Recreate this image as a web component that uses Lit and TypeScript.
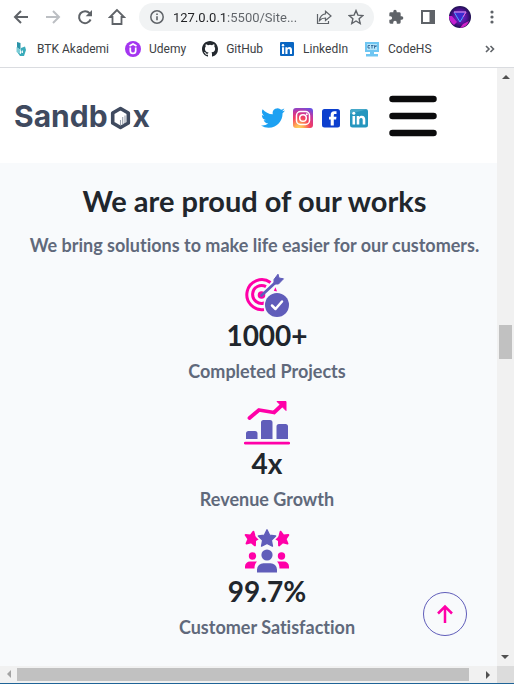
import { LitElement, html, css, svg } from "lit";
import { customElement } from "lit/decorators.js";

const star = "M0-9.5 2.9-3.6 9.4-2.8 4.7 1.8 5.9 8.3 0 5.2-5.9 8.3-4.7 1.8-9.4-2.8-2.9-3.6Z";

const icons = {
  back: html`<svg width="16" height="16" viewBox="0 0 16 16"><path d="M15 8H2.500M8 2 2 8l6 6" fill="none" stroke="currentColor" stroke-width="2"/></svg>`,
  forward: html`<svg width="16" height="16" viewBox="0 0 16 16"><path d="M1 8h12.500M8 2l6 6-6 6" fill="none" stroke="currentColor" stroke-width="2"/></svg>`,
  reload: html`<svg width="16" height="16" viewBox="0 0 16 16"><path d="M13.600 10.500A6 6 0 1 1 12.600 4.200" fill="none" stroke="currentColor" stroke-width="2"/><path d="M15 1v6.300H8.700Z" fill="currentColor"/></svg>`,
  home: html`<svg width="18" height="18" viewBox="0 0 18 18"><path d="M9 2 2 9h2.500v7h9V9H16Z" fill="none" stroke="currentColor" stroke-width="1.800"/></svg>`,
  info: html`<svg width="16" height="16" viewBox="0 0 16 16"><circle cx="8" cy="8" r="6.200" fill="none" stroke="currentColor" stroke-width="1.500"/><path d="M7.200 7.200h1.600v4H7.200zM7.200 4.500h1.600v1.600H7.200z" fill="currentColor"/></svg>`,
  share: html`<svg width="16" height="16" viewBox="0 0 16 16"><path d="M1.500 5v9.500h11V12M9.500 2.200 15 7l-5.500 4.500V9C7 9 5 9.700 3.500 11.500 4 7.500 6 5.200 9.500 4.800Z" fill="none" stroke="currentColor" stroke-width="1.200"/></svg>`,
  star: html`<svg width="16" height="16" viewBox="0 0 16 16"><path d="m8 1.600 1.900 4.500 4.900.4-3.700 3.200 1.100 4.800L8 12l-4.200 2.500 1.100-4.800L1.200 6.500l4.900-.4Z" fill="none" stroke="currentColor" stroke-width="1.400"/></svg>`,
  puzzle: html`<svg width="16" height="16" viewBox="0 0 24 24"><path d="M20.500 11H19V7a2 2 0 0 0-2-2h-4V3.500a2.500 2.500 0 0 0-5 0V5H4a2 2 0 0 0-2 2v3.800h1.500a2.700 2.700 0 0 1 0 5.400H2V20a2 2 0 0 0 2 2h3.800v-1.500a2.700 2.700 0 0 1 5.400 0V22H17a2 2 0 0 0 2-2v-4h1.500a2.500 2.500 0 0 0 0-5Z" fill="currentColor"/></svg>`,
  panel: html`<svg width="14" height="14" viewBox="0 0 14 14"><path d="M1 1h12v12H1z" fill="none" stroke="currentColor" stroke-width="2"/><path d="M8.500 1H13v12H8.500z" fill="currentColor"/></svg>`,
  avatar: html`<svg width="22" height="22" viewBox="0 0 22 22"><defs><radialGradient id="av"><stop offset="0" stop-color="#6a35d8"/><stop offset=".6" stop-color="#57119e"/><stop offset="1" stop-color="#1d1050"/></radialGradient></defs><circle cx="11" cy="11" r="11" fill="url(#av)"/><path d="M0 10a11 11 0 0 0 5 9l3-3-5-6Z" fill="#c41fd0"/><path d="M14 18l6-3a11 11 0 0 1-9 7Z" fill="#d021c8"/><path d="M5 6h12l-6 10Z" fill="#3b2bd0" stroke="#49a8ff" stroke-width="1"/><path d="M5 6h12l-3 5" fill="none" stroke="#f05ad8" stroke-width="1"/></svg>`,
  menu: html`<svg width="4" height="16" viewBox="0 0 4 16"><circle cx="2" cy="3" r="1.600" fill="currentColor"/><circle cx="2" cy="8" r="1.600" fill="currentColor"/><circle cx="2" cy="13" r="1.600" fill="currentColor"/></svg>`,
  btk: html`<svg width="16" height="16" viewBox="0 0 16 16"><path d="M4 1l3.500 1v7L4 6.500Z" fill="#2a93a8"/><path d="M3.500 6l4 3-1 4-3-2Z" fill="#7accd6"/><path d="M8 7l4-1.500 1 3.500-2 6H7l-2.500-3.500L8 13Z" fill="#3aabba"/><path d="M8.500 10l1.500-.8v2.800H8.500Z" fill="#e8f7f9"/></svg>`,
  udemy: html`<svg width="16" height="16" viewBox="0 0 16 16"><circle cx="8" cy="8" r="8" fill="#a435f0"/><path d="m4.500 5 3.500-2 3.500 2M5.300 6.500v3.200a2.700 2.700 0 0 0 5.400 0V6.500" fill="none" stroke="#fff" stroke-width="1.700"/></svg>`,
  github: html`<svg width="16" height="16" viewBox="0 0 16 16"><path fill="#24292f" d="M8 0C3.580 0 0 3.580 0 8c0 3.540 2.290 6.530 5.470 7.590.4.070.55-.17.55-.38 0-.19-.01-.82-.01-1.490-2.010.37-2.530-.49-2.690-.94-.09-.23-.48-.94-.82-1.130-.28-.15-.68-.52-.01-.53.63-.01 1.080.58 1.230.82.72 1.210 1.870.87 2.330.66.07-.52.28-.87.51-1.070-1.780-.2-3.640-.89-3.640-3.950 0-.87.31-1.590.82-2.150-.08-.2-.36-1.020.08-2.120 0 0 .67-.21 2.200.82a7.640 7.640 0 0 1 4 0c1.530-1.040 2.200-.82 2.200-.82.44 1.100.16 1.920.08 2.120.51.56.82 1.270.82 2.150 0 3.070-1.870 3.750-3.650 3.950.29.25.54.73.54 1.480 0 1.070-.01 1.930-.01 2.200 0 .21.15.46.55.38A8.010 8.010 0 0 0 16 8c0-4.420-3.580-8-8-8Z"/></svg>`,
  linkedin: html`<svg width="16" height="16" viewBox="0 0 16 16"><rect x="1" y="1" width="14" height="14" rx="1" fill="#0a66c2"/><path d="M3 6.300h2.100V13H3zM6.400 6.300h2v.9c.4-.7 1.100-1.100 2-1.100 2.200 0 2.600 1.400 2.600 3.200V13h-2.100V9.700c0-.8 0-1.800-1.100-1.800s-1.300.9-1.300 1.700V13H6.400z" fill="#fff"/><circle cx="4" cy="4.200" r="1.200" fill="#fff"/></svg>`,
  codehs: html`<svg width="16" height="16" viewBox="0 0 16 16"><path d="M1 1h14v10H1zM6 11h4v2H6zM2 13h12v2.500H2z" fill="#6fc6f2"/><path d="M3 3h10v6H3z" fill="#b5e4fa"/><path d="M4 7V4.500h2M4 7h2M8 4v3.500M7 4.500h2.500M10.500 7.500v-3l1.500 1.500V4" fill="none" stroke="#3b6f9c" stroke-width="1"/></svg>`,
  hexagon: html`<svg width="21" height="28" viewBox="0 -4 21 28"><path d="M10.500 2.500 18.300 7v10l-7.800 4.500L2.700 17V7Z" fill="#fff" stroke="#3f4a5f" stroke-width="3.600" stroke-linejoin="round"/><path d="M10.500 19v-5M12.700 18.500v-7.500M15 17V9.500" stroke="#9aa1ad" stroke-width="1.100"/></svg>`,
  twitter: html`<svg width="24" height="22" viewBox="0 1.500 24 21"><path fill="#1da1f2" d="M23.950 4.570a10 10 0 0 1-2.820.77 4.960 4.960 0 0 0 2.160-2.720c-.95.550-2.010.96-3.130 1.180a4.920 4.920 0 0 0-8.380 4.480C7.690 8.100 4.070 6.130 1.640 3.160a4.820 4.820 0 0 0-.67 2.480c0 1.710.87 3.210 2.190 4.100a4.900 4.900 0 0 1-2.230-.62v.06a4.920 4.920 0 0 0 3.950 4.830 5 5 0 0 1-2.210.08 4.940 4.940 0 0 0 4.600 3.420A9.870 9.870 0 0 1 0 19.540a13.990 13.990 0 0 0 7.550 2.210c9.050 0 14-7.500 14-13.980 0-.21 0-.42-.02-.63a9.940 9.940 0 0 0 2.420-2.570Z"/></svg>`,
  instagram: html`<svg width="20" height="20" viewBox="0 0 20 20"><defs><radialGradient id="ig" cx=".3" cy="1.050" r="1.150"><stop offset="0" stop-color="#ffdc64"/><stop offset=".2" stop-color="#ffb054"/><stop offset=".5" stop-color="#f4405f"/><stop offset=".75" stop-color="#c9359b"/><stop offset="1" stop-color="#6a4fe0"/></radialGradient></defs><rect width="20" height="20" rx="3" fill="url(#ig)"/><rect x="3.500" y="3.500" width="13" height="13" rx="4" fill="none" stroke="#fff" stroke-width="1.500"/><circle cx="10" cy="10" r="3.300" fill="none" stroke="#fff" stroke-width="1.500"/><circle cx="13.800" cy="6.200" r="1" fill="#fff"/></svg>`,
  facebook: html`<svg width="20" height="20" viewBox="0 0 20 20"><rect x="1" y="1" width="18" height="18.500" rx="2.500" fill="#0c3fce"/><path d="M9.700 17.500v-6H8V8.800h1.700V7c0-2.600 1.200-3.800 3.600-3.800H15.500V6H14c-.9 0-1.200.4-1.200 1.200v1.600h2.700l-.4 2.700h-2.300v6Z" fill="#fff"/></svg>`,
  linkedinAlt: html`<svg width="20" height="20" viewBox="0 0 20 20"><rect x="1" y="1" width="18" height="18.500" rx="2.500" fill="#2596be"/><path d="M1 6V3.500A2.500 2.500 0 0 1 3.500 1H19Z" fill="#45a8c9"/><path d="M3.500 8h2.600v8.500H3.500zM7.700 8h2.500v1.200c.5-.9 1.400-1.400 2.600-1.400 2.700 0 3.500 1.700 3.500 4v4.700h-2.600v-4.300c0-1.200-.2-2.200-1.600-2.200s-1.800 1-1.800 2.100v4.400H7.700z" fill="#fff"/><circle cx="4.800" cy="5.300" r="1.500" fill="#fff"/></svg>`,
  burger: html`<svg width="48" height="42" viewBox="0 0 48 42"><path d="M3.500 4h41M3.500 21h41M3.500 38h41" stroke="#0b0b0c" stroke-width="6.500" stroke-linecap="round"/></svg>`,
  target: html`<svg width="46" height="44" viewBox="0 0 46 44"><g fill="none" stroke="#ff00a8" stroke-width="3"><path d="M26.500 9.400A15 15 0 1 0 20 36.500"/><path d="M22 13.600A9 9 0 1 0 20.500 30"/></g><circle cx="17.500" cy="22" r="3.800" fill="#ff00a8"/><path d="M31.500 14.200 33.200 18.800 29.800 17.800Z" fill="#ff00a8"/><path d="M17.500 22.500 32 9" stroke="#605dba" stroke-width="2.800" stroke-linecap="round"/><path d="M30 6.500 34 1.200 35 5l4.500.8L34.500 11H30Z" fill="#605dba" stroke="#605dba" stroke-linejoin="round"/><circle cx="33" cy="32" r="13.500" fill="#f8fafc"/><circle cx="33" cy="32" r="12" fill="#605dba"/><path d="m28 32.500 3.500 3.500 6.500-7.500" fill="none" stroke="#fff" stroke-width="2.500" stroke-linecap="round" stroke-linejoin="round"/></svg>`,
  growth: html`<svg width="46" height="44" viewBox="0 0 46 44"><path d="M5.500 17 15 9l15 2.500 8-7.500" fill="none" stroke="#ff00a8" stroke-width="3.800" stroke-linecap="round" stroke-linejoin="round"/><path d="M33 .500h9v9Z" fill="#ff00a8" stroke="#ff00a8" stroke-linejoin="round"/><path d="M2 38v-5.500a2.500 2.500 0 0 1 2.500-2.500h6.500a2.500 2.500 0 0 1 2.500 2.500V38ZM17 38V21.500a2.500 2.500 0 0 1 2.500-2.500h6.500a2.500 2.500 0 0 1 2.500 2.500V38ZM32.500 38V25.500a2.500 2.500 0 0 1 2.500-2.500h6.500a2.500 2.500 0 0 1 2.500 2.500V38Z" fill="#605dba"/><path d="M1.300 42.200h43.400" stroke="#ff00a8" stroke-width="2.800" stroke-linecap="round"/></svg>`,
  people: html`<svg width="46" height="44" viewBox="0 0 46 44"><g stroke-linejoin="round">${svg`
    <g fill="#ff00a8" stroke="#ff00a8" stroke-width="2.500"><path d=${star} transform="translate(8 9.500) rotate(12) scale(.74)"/><path d=${star} transform="translate(38 9.500) rotate(-12) scale(.74)"/></g>
    <path d=${star} fill="#f8fafc" stroke="#f8fafc" stroke-width="4" transform="translate(23 9.500)"/>
    <path d=${star} fill="#605dba" stroke="#605dba" stroke-width="1.500" transform="translate(23 9.500) scale(.92)"/>`}</g>
    <g fill="#ff00a8"><circle cx="8.500" cy="27" r="3.700"/><circle cx="37.500" cy="27" r="3.700"/><path d="M1 39.500v-2a5 5 0 0 1 5-5h7c-1.500 1.500-2.500 3.500-2.500 7ZM45 39.500v-2a5 5 0 0 0-5-5h-7c1.500 1.500 2.500 3.500 2.500 7Z"/></g>
    <g fill="#605dba"><circle cx="23" cy="26" r="5.600"/><path d="M13 43.500v-3a6.500 6.500 0 0 1 6.500-6.300h7A6.500 6.500 0 0 1 33 40.500v3Z"/></g></svg>`,
  up: html`<svg width="18" height="20" viewBox="0 0 18 20"><path d="M9 19V3M2 9.500l7-7 7 7" fill="none" stroke="#ff00a8" stroke-width="2.500"/></svg>`,
};

@customElement("browser-bar")
export class BrowserBar extends LitElement {
  static styles = css`
    :host { display: block; background: #fff; border-bottom: 1px solid #dadce0; font-family: "Roboto", sans-serif; color: #5f6368; }
    svg { display: block; }
    .toolbar { display: flex; align-items: center; height: 34px; padding: 0 6px 0 5px; }
    button { display: flex; align-items: center; justify-content: center; width: 32px; height: 32px; padding: 0; border: 0; background: none; color: inherit; flex: none; }
    button:disabled { color: #bcbfc3; }
    .address { display: flex; align-items: center; flex: 1; min-width: 0; height: 28px; margin: 0 6px; padding: 0 2px 0 10px; border-radius: 14px; background: #f1f3f4; }
    .url { flex: 1; min-width: 0; margin-left: 8px; padding: 0; border: 0; outline: 0; font: 13px "Roboto", sans-serif; color: transparent; background: linear-gradient(90deg, #202124 55px, #5f6368 55px); background-clip: text; -webkit-background-clip: text; }
    .bookmarks { display: flex; align-items: center; height: 33px; padding: 0 16px 4px 13px; gap: 16px; box-sizing: border-box; }
    .bookmark { display: flex; align-items: center; gap: 8px; font-size: 12px; line-height: 16px; color: #3c4043; text-decoration: none; white-space: nowrap; }
    .more { width: 16px; height: 16px; margin-left: auto; }
  `;
  private links = [
    { icon: icons.btk, name: "BTK Akademi" },
    { icon: icons.udemy, name: "Udemy" },
    { icon: icons.github, name: "GitHub" },
    { icon: icons.linkedin, name: "LinkedIn" },
    { icon: icons.codehs, name: "CodeHS" },
  ];
  render() {
    return html`
      <div class="toolbar">
        <button aria-label="Back">${icons.back}</button>
        <button aria-label="Forward" disabled>${icons.forward}</button>
        <button aria-label="Reload">${icons.reload}</button>
        <button aria-label="Home">${icons.home}</button>
        <div class="address">
          ${icons.info}
          <input class="url" aria-label="Address" value="127.0.0.1:5500/Site..." />
          <button aria-label="Share">${icons.share}</button>
          <button aria-label="Bookmark this page">${icons.star}</button>
        </div>
        <button aria-label="Extensions">${icons.puzzle}</button>
        <button aria-label="Side panel">${icons.panel}</button>
        <button aria-label="Profile">${icons.avatar}</button>
        <button aria-label="Menu">${icons.menu}</button>
      </div>
      <nav class="bookmarks" aria-label="Bookmarks">
        ${this.links.map((l) => html`<a class="bookmark" href="#">${l.icon}<span>${l.name}</span></a>`)}
        <button class="more" aria-label="More bookmarks"><svg width="10" height="8" viewBox="0 0 10 8"><path d="m1 1 3 3-3 3M5.500 1l3 3-3 3" fill="none" stroke="currentColor" stroke-width="1.600"/></svg></button>
      </nav>`;
  }
}

@customElement("scroll-bar")
export class ScrollBar extends LitElement {
  static styles = css`
    :host { display: flex; background: #f1f1f1; }
    :host([axis="y"]) { flex-direction: column; width: 17px; }
    :host([axis="x"]) { height: 17px; }
    .arrow { display: flex; align-items: center; justify-content: center; width: 17px; height: 17px; padding: 0; border: 0; background: none; color: #505050; flex: none; }
    .arrow:disabled { color: #a3a3a3; }
    .left { transform: rotate(-90deg); }
    .right { transform: rotate(90deg); }
    .down { transform: rotate(180deg); }
    .track { display: flex; flex: 1; flex-direction: inherit; }
    .thumb { background: #c1c1c1; }
    :host([axis="y"]) .thumb { flex: 34; margin: 0 2px; }
    :host([axis="y"]) .before { flex: 240; }
    :host([axis="y"]) .after { flex: 290; }
    :host([axis="x"]) .thumb { flex: 453; margin: 2px 0; }
    :host([axis="x"]) .after { flex: 11; }
  `;
  static properties = { axis: { type: String, reflect: true } };
  declare axis: string;
  render() {
    const arrow = html`<svg width="8" height="4" viewBox="0 0 8 4"><path d="M4 0 8 4H0Z" fill="currentColor"/></svg>`;
    const y = this.axis === "y";
    return html`
      <button class="arrow ${y ? "" : "left"}" aria-label="Scroll back" ?disabled=${!y}>${arrow}</button>
      <div class="track"><div class="before"></div><div class="thumb"></div><div class="after"></div></div>
      <button class="arrow ${y ? "down" : "right"}" aria-label="Scroll on">${arrow}</button>`;
  }
}

@customElement("app-root")
export class AppRoot extends LitElement {
  static styles = css`
    :host { display: flex; flex-direction: column; height: 100vh; box-sizing: border-box; border-bottom: 1px solid #1f6497; font-family: "Lato", sans-serif; font-variant-ligatures: none; }
    svg { display: block; }
    .window { display: grid; grid-template-columns: 1fr 17px; grid-template-rows: 1fr 17px; flex: 1; min-height: 0; }
    .page { position: relative; overflow: hidden; min-width: 0; background: #f8fafc; }
    .corner { background: #dcdcdc; }
    .header { display: flex; align-items: center; height: 95px; padding: 0 60px 0 14px; background: #fff; }
    .logo { display: flex; align-items: center; gap: 2px; margin-right: auto; font: 700 30px/36px "Inter", sans-serif; color: #3f4a5f; text-decoration: none; }
    .social { display: flex; align-items: center; gap: 8px; margin-right: 20px; padding-top: 4px; }
    .burger { padding: 0; border: 0; background: none; }
    .works { padding-top: 20px; text-align: center; }
    .intro { padding-left: 12px; }
    h2, h3, p { margin: 0; white-space: nowrap; }
    h2, h3 { color: #21262c; font-weight: 700; line-height: 36px; }
    h2 { font-size: 29px; }
    h3 { font-size: 28px; }
    p { font-size: 18px; line-height: 24px; font-weight: 700; color: #60697b; }
    .intro p { margin-top: 14px; }
    .stats { display: flex; flex-direction: column; gap: 18px; padding: 16px 0 0 37px; }
    .stat { display: flex; flex-direction: column; align-items: center; }
    .stat p { margin-top: 6px; }
    .top { position: absolute; right: 30px; bottom: 30px; display: flex; align-items: center; justify-content: center; width: 44px; height: 44px; padding: 0; border: 1px solid #605dba; border-radius: 50%; background: none; }
  `;
  private stats = [
    { icon: icons.target, value: "1000+", label: "Completed Projects" },
    { icon: icons.growth, value: "4x", label: "Revenue Growth" },
    { icon: icons.people, value: "99.7%", label: "Customer Satisfaction" },
  ];
  render() {
    return html`
      <browser-bar></browser-bar>
      <div class="window">
        <main class="page">
          <header class="header">
            <a class="logo" href="#" aria-label="Sandbox"><span>Sandb</span>${icons.hexagon}<span>x</span></a>
            <nav class="social" aria-label="Social media">
              <a href="#" aria-label="Twitter">${icons.twitter}</a>
              <a href="#" aria-label="Instagram">${icons.instagram}</a>
              <a href="#" aria-label="Facebook">${icons.facebook}</a>
              <a href="#" aria-label="LinkedIn">${icons.linkedinAlt}</a>
            </nav>
            <button class="burger" aria-label="Open menu">${icons.burger}</button>
          </header>
          <section class="works">
            <div class="intro">
              <h2>We are proud of our works</h2>
              <p>We bring solutions to make life easier for our customers.</p>
            </div>
            <div class="stats">
              ${this.stats.map((s) => html`<div class="stat">${s.icon}<h3>${s.value}</h3><p>${s.label}</p></div>`)}
            </div>
          </section>
          <button class="top" aria-label="Back to top">${icons.up}</button>
        </main>
        <scroll-bar axis="y"></scroll-bar>
        <scroll-bar axis="x"></scroll-bar>
        <div class="corner"></div>
      </div>`;
  }
}
